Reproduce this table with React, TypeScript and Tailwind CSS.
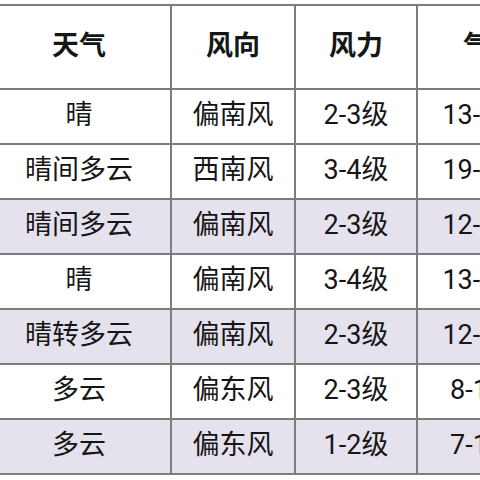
const header = ['天气', '风向', '风力', '气温']

const rows = [
    ['晴', '偏南风', '2-3级', '13-24℃'],
    ['晴间多云', '西南风', '3-4级', '19-27℃'],
    ['晴间多云', '偏南风', '2-3级', '12-23℃'],
    ['晴', '偏南风', '3-4级', '13-25℃'],
    ['晴转多云', '偏南风', '2-3级', '12-22℃'],
    ['多云', '偏东风', '2-3级', '8-18℃'],
    ['多云', '偏东风', '1-2级', '7-16℃'],
]

export default function App() {
    return (
        <div
            className="w-[480px] h-[480px] overflow-hidden bg-white pt-[4px]"
            style={{ fontFamily: 'Roboto, "Noto Sans CJK SC", sans-serif' }}
        >
            <table className="ml-[-14px] border-collapse table-fixed w-[576px] text-[27px] text-[#161616]">
                <colgroup>
                    <col className="w-[184px]" />
                    <col className="w-[124px]" />
                    <col className="w-[122px]" />
                    <col className="w-[146px]" />
                </colgroup>
                <thead>
                    <tr className="h-[84px]">
                        {header.map(h => (
                            <th key={h} className="border-2 border-[#7c7c7c] font-bold text-center whitespace-nowrap overflow-hidden pb-[2px]">
                                {h}
                            </th>
                        ))}
                    </tr>
                </thead>
                <tbody>
                    {rows.map((r, i) => (
                        <tr key={i} className={`h-[55px] ${i % 2 === 0 && i > 0 ? 'bg-[#e5e2ed]' : 'bg-white'}`}>
                            {r.map((c, j) => (
                                <td key={j} className="border-2 border-[#7c7c7c] text-center whitespace-nowrap overflow-hidden pb-[2px]">
                                    {c}
                                </td>
                            ))}
                        </tr>
                    ))}
                </tbody>
            </table>
        </div>
    )
}
